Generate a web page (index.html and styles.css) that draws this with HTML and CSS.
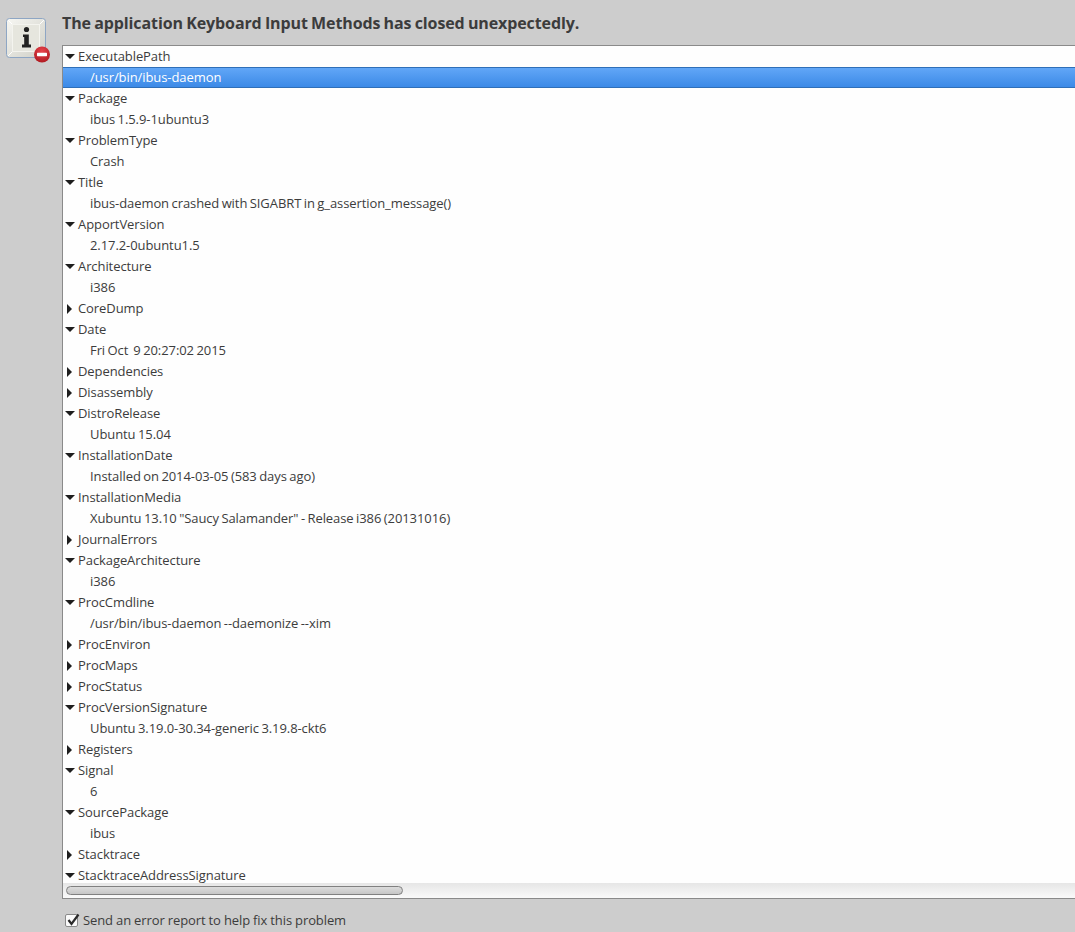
FILE: index.html
```html
<!DOCTYPE html>
<html lang="en">
<head>
<meta charset="utf-8">
<title>Crash report</title>
<link rel="stylesheet" href="styles.css">
</head>
<body>
<div class="dialog">
  <aside class="icon-col">
    <svg class="app-icon" width="48" height="48" viewBox="0 0 48 48" aria-hidden="true">
      <defs>
        <linearGradient id="tile" x1="0" y1="0" x2="1" y2="1">
          <stop offset="0" stop-color="#f7f7f3"/>
          <stop offset="1" stop-color="#cfcfc6"/>
        </linearGradient>
        <radialGradient id="stop" cx="0.5" cy="0.3" r="0.8">
          <stop offset="0" stop-color="#e8434a"/>
          <stop offset="1" stop-color="#a8151c"/>
        </radialGradient>
      </defs>
      <rect x="0.5" y="0.5" width="39" height="39" rx="3" fill="url(#tile)" stroke="#8ea6c4"/>
      <path d="M2 2 L7 7 M38 2 L33 7 M2 38 L7 33 M38 38 L33 33" stroke="#ffffff" stroke-width="1"/>
      <rect x="6.5" y="6.5" width="27" height="27" fill="#e6e6de" stroke="#f4f4ef"/>
      <circle cx="20.5" cy="11.5" r="2.6" fill="#222"/>
      <path d="M17 16.5 H22.8 V26.5 H25 V29.5 H16 V26.5 H18.2 V19 H17 Z" fill="#222"/>
      <circle cx="36" cy="36.5" r="8" fill="url(#stop)"/>
      <rect x="31" y="34.8" width="10" height="3.4" rx="0.6" fill="#ffffff"/>
    </svg>
  </aside>
  <main class="main-col">
    <h1 class="title">The application Keyboard Input Methods has closed unexpectedly.</h1>
    <section class="tree-box">
      <ul class="tree">
        <li class="row"><span class="arrow open"></span>ExecutablePath</li>
        <li class="row child selected">/usr/bin/ibus-daemon</li>
        <li class="row"><span class="arrow open"></span>Package</li>
        <li class="row child">ibus 1.5.9-1ubuntu3</li>
        <li class="row"><span class="arrow open"></span>ProblemType</li>
        <li class="row child">Crash</li>
        <li class="row"><span class="arrow open"></span>Title</li>
        <li class="row child">ibus-daemon crashed with SIGABRT in g_assertion_message()</li>
        <li class="row"><span class="arrow open"></span>ApportVersion</li>
        <li class="row child">2.17.2-0ubuntu1.5</li>
        <li class="row"><span class="arrow open"></span>Architecture</li>
        <li class="row child">i386</li>
        <li class="row"><span class="arrow closed"></span>CoreDump</li>
        <li class="row"><span class="arrow open"></span>Date</li>
        <li class="row child">Fri Oct  9 20:27:02 2015</li>
        <li class="row"><span class="arrow closed"></span>Dependencies</li>
        <li class="row"><span class="arrow closed"></span>Disassembly</li>
        <li class="row"><span class="arrow open"></span>DistroRelease</li>
        <li class="row child">Ubuntu 15.04</li>
        <li class="row"><span class="arrow open"></span>InstallationDate</li>
        <li class="row child">Installed on 2014-03-05 (583 days ago)</li>
        <li class="row"><span class="arrow open"></span>InstallationMedia</li>
        <li class="row child">Xubuntu 13.10 "Saucy Salamander" - Release i386 (20131016)</li>
        <li class="row"><span class="arrow closed"></span>JournalErrors</li>
        <li class="row"><span class="arrow open"></span>PackageArchitecture</li>
        <li class="row child">i386</li>
        <li class="row"><span class="arrow open"></span>ProcCmdline</li>
        <li class="row child">/usr/bin/ibus-daemon --daemonize --xim</li>
        <li class="row"><span class="arrow closed"></span>ProcEnviron</li>
        <li class="row"><span class="arrow closed"></span>ProcMaps</li>
        <li class="row"><span class="arrow closed"></span>ProcStatus</li>
        <li class="row"><span class="arrow open"></span>ProcVersionSignature</li>
        <li class="row child">Ubuntu 3.19.0-30.34-generic 3.19.8-ckt6</li>
        <li class="row"><span class="arrow closed"></span>Registers</li>
        <li class="row"><span class="arrow open"></span>Signal</li>
        <li class="row child">6</li>
        <li class="row"><span class="arrow open"></span>SourcePackage</li>
        <li class="row child">ibus</li>
        <li class="row"><span class="arrow closed"></span>Stacktrace</li>
        <li class="row"><span class="arrow open"></span>StacktraceAddressSignature</li>
      </ul>
      <div class="hscroll"><div class="thumb"></div></div>
    </section>
    <label class="send">
      <span class="check">
        <svg width="14" height="14" viewBox="0 0 14 14" aria-hidden="true"><path d="M2.5 7 L5.5 11 L12.5 1.5" fill="none" stroke="#2a2a2a" stroke-width="2.2"/></svg>
      </span>
      <span class="send-text">Send an error report to help fix this problem</span>
    </label>
  </main>
</div>
</body>
</html>
```
FILE: styles.css
```css
html, body {
  margin: 0;
  padding: 0;
  height: 932px;
  overflow: hidden;
  background: #cdcdcd;
}
body {
  font-family: "Open Sans", "Noto Sans", sans-serif;
  font-size: 13px;
  color: #3c3c3c;
}
.dialog {
  display: flex;
  width: 1075px;
  height: 932px;
  overflow: hidden;
}
.icon-col {
  flex: 0 0 62px;
  padding: 18px 0 0 6px;
  box-sizing: border-box;
}
.app-icon { display: block; }
.main-col {
  flex: 1 1 auto;
  min-width: 0;
}
.title {
  margin: 0;
  height: 45px;
  box-sizing: border-box;
  padding-top: 12px;
  font-size: 16px;
  line-height: 23px;
  font-weight: 700;
  letter-spacing: -0.1px;
  word-spacing: -0.8px;
  color: #3c3c3c;
  white-space: nowrap;
}
.tree-box {
  height: 854px;
  box-sizing: border-box;
  background: #fefefe;
  border: 1px solid #8a8a8a;
  border-right: 0;
  display: flex;
  flex-direction: column;
}
.tree {
  list-style: none;
  margin: 0;
  padding: 0;
  height: 837px;
  overflow: hidden;
  flex: none;
}
.row {
  height: 21px;
  line-height: 21px;
  padding-left: 15px;
  white-space: pre;
  position: relative;
  letter-spacing: -0.08px;
  word-spacing: -0.8px;
}
.child { padding-left: 27px; }
.selected {
  color: #ffffff;
  background: linear-gradient(#63a8f8, #3a88e6);
  box-shadow: inset 0 1px 0 #2f6fb8, inset 0 -1px 0 #2f6fb8;
}
.arrow {
  position: absolute;
  width: 0;
  height: 0;
}
.arrow.open {
  left: 2px;
  top: 8px;
  border-left: 5px solid transparent;
  border-right: 5px solid transparent;
  border-top: 5px solid #1e1e1e;
}
.arrow.closed {
  left: 4px;
  top: 6px;
  border-top: 5px solid transparent;
  border-bottom: 5px solid transparent;
  border-left: 5px solid #1e1e1e;
}
.hscroll {
  flex: 1 1 auto;
  padding: 3px 0 0 3px;
  background: linear-gradient(#e6e6e6, #fafafa);
}
.thumb {
  width: 335px;
  height: 7px;
  border: 1px solid #808080;
  border-radius: 5px;
  background: linear-gradient(#dcdcdc, #c6c6c6);
}
.send {
  display: flex;
  align-items: center;
  gap: 5px;
  margin: 12px 0 0 3px;
  height: 18px;
  line-height: 18px;
  color: #3c3c3c;
}
.send-text {
  letter-spacing: -0.1px;
  word-spacing: -0.2px;
}
.check {
  width: 11px;
  height: 11px;
  background: #fafafa;
  border: 1px solid #8a8a8a;
  border-radius: 2px;
  position: relative;
  display: block;
}
.check svg {
  position: absolute;
  left: 0;
  top: -2px;
}
```
